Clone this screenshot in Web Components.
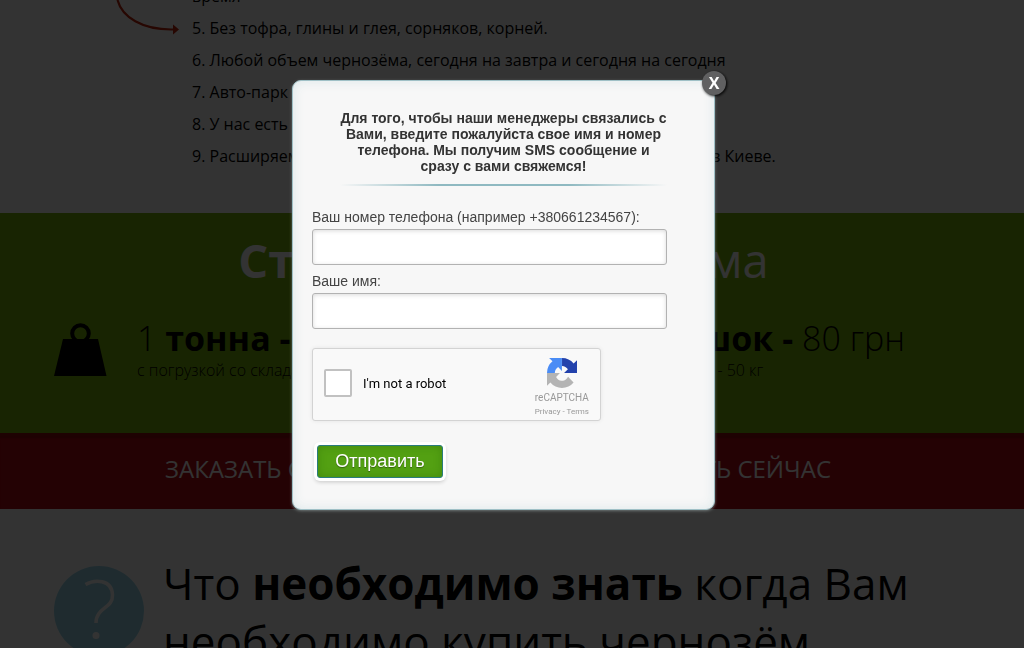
<!DOCTYPE html>
<html lang="ru">
<head>
<meta charset="utf-8">
<title>Чернозём</title>
<style>
html, body { margin: 0; height: 100%; }
body { overflow: hidden; background: #fff; color: #000; font-family: "Open Sans", "Noto Sans", sans-serif; }
</style>
</head>
<body>
<landing-page></landing-page>
<modal-overlay>
  <order-form></order-form>
</modal-overlay>
<script>
function define(name, html) {
  const template = document.createElement('template');
  template.innerHTML = html;
  customElements.define(name, class extends HTMLElement {
    constructor() {
      super();
      this.attachShadow({ mode: 'open' }).append(template.content.cloneNode(true));
    }
  });
}

define('benefit-list', `
<style>
:host { display: block; position: relative; height: 213px; box-sizing: border-box; padding-left: 192px; overflow: hidden; }
ul { list-style: none; margin: -20px 0 0; padding: 0; font-size: 16px; line-height: 32px; white-space: nowrap; }
svg { position: absolute; left: 112px; top: 0; }
</style>
<svg width="70" height="40" viewBox="0 0 70 40" aria-hidden="true">
  <path d="M5.500 0C10 17 30 30 61 29.500" fill="none" stroke="#c0240c" stroke-width="2.200"/>
  <path d="M61 24.500 67 29.500 61 34.500z" fill="#c0240c"/>
</svg>
<ul>
  <li>время</li>
  <li>5. Без тофра, глины и глея, сорняков, корней.</li>
  <li>6. Любой объем чернозёма, сегодня на завтра и сегодня на сегодня</li>
  <li>7. Авто-парк</li>
  <li>8. У нас есть</li>
  <li>9. Расширяем сеть доставки чернозёма по городам склады есть и в Киеве.</li>
</ul>`);

define('price-item', `
<style>
:host { display: block; white-space: nowrap; }
h3 { margin: 0; font-size: 34px; line-height: 44px; font-weight: 300; }
p { margin: 0; font-size: 16px; line-height: 20px; font-weight: 300; }
</style>
<h3><slot name="price"></slot></h3>
<p><slot></slot></p>`);

define('price-section', `
<style>
:host { display: block; height: 220px; box-sizing: border-box; padding: 15px 17px 0 0; background: #7ab60a; }
h2 { margin: 0; color: #fff; font-size: 47px; line-height: 64px; font-weight: 400; text-align: center; }
b { font-weight: 700; }
.prices { display: grid; grid-template-columns: 53px 1fr auto; column-gap: 30px; align-items: start; padding: 24px 102px 0 54px; }
svg { display: block; margin-top: 7px; }
</style>
<h2><b>Стоимость</b> чернозёма</h2>
<div class="prices">
  <svg width="53" height="54" viewBox="0 0 53 54" aria-hidden="true">
    <circle cx="26.500" cy="10.500" r="8.300" fill="none" stroke="#000" stroke-width="4"/>
    <path d="M9 16H44L52.500 53H0z"/>
  </svg>
  <price-item><span slot="price">1 <b>тонна -</b></span>с погрузкой со склада</price-item>
  <price-item><span slot="price">1 <b>мешок -</b> 80 грн</span>вес 1 мешка - 50 кг</price-item>
</div>`);

define('order-bar', `
<style>
:host { display: flex; justify-content: space-between; align-items: center; height: 76px; box-sizing: border-box; padding: 0 193px 4px 165px; background: #b40a14; box-shadow: inset 0 6px 2px -1px #960a0a; }
a { color: #fff; text-decoration: none; font-size: 24px; line-height: 32px; }
</style>
<a href="#order">ЗАКАЗАТЬ СЕЙЧАС</a>
<a href="#order">ЗАКАЗАТЬ СЕЙЧАС</a>`);

define('question-section', `
<style>
:host { display: flex; align-items: flex-start; gap: 19px; padding: 45px 17px 0 54px; }
svg { flex: none; margin-top: 12px; }
h2 { flex: 1; margin: 0; font-size: 44px; line-height: 58px; font-weight: 400; }
b { font-weight: 700; }
</style>
<svg width="90" height="90" viewBox="0 0 90 90" aria-hidden="true">
  <circle cx="45" cy="45" r="45" fill="#9ad8ec"/>
  <path d="M31.500 18.500C40 13.500 58 12.500 58.500 29C59 43 42 41 42 57" fill="none" stroke="#fff" stroke-width="3.500"/>
  <circle cx="42" cy="69.500" r="3.500" fill="#fff"/>
</svg>
<h2>Что <b>необходимо знать</b> когда Вам необходимо купить чернозём</h2>`);

define('landing-page', `
<style>:host { display: block; height: 100%; overflow: hidden; }</style>
<benefit-list></benefit-list>
<price-section></price-section>
<order-bar></order-bar>
<question-section></question-section>`);

define('modal-overlay', `
<style>
:host { position: fixed; inset: 0; display: flex; justify-content: center; align-items: flex-start; padding: 80px 17px 0 0; background: rgba(0,0,0,.8); font-family: "Liberation Sans", Arial, sans-serif; }
.box { position: relative; width: 423px; box-sizing: border-box; padding: 29px 19px 31px; border: 1px solid #9fc0c6; border-radius: 9px; background: #f7f7f7; box-shadow: inset 0 0 12px #dce8ea, 0 1px 3px #707878; }
.close { position: absolute; top: -10px; right: -12px; width: 24px; height: 24px; padding: 0; border: 0; border-radius: 50%; background: #606061; color: #fff; font: bold 16px/24px "Open Sans", sans-serif; box-shadow: 1px 1px 3px #000; }
</style>
<div class="box" role="dialog" aria-modal="true">
  <slot></slot>
  <button class="close" type="button">X</button>
</div>`);

define('text-field', `
<style>
:host { display: block; }
label { display: block; font-size: 14px; line-height: 18px; color: #444; }
input { display: block; width: 355px; max-width: 100%; height: 36px; box-sizing: border-box; margin: 3px 0 7px; padding: 0 10px; border: 1px solid #b2b2b2; border-radius: 3px; background: #fff; box-shadow: inset 0 1px 4px rgba(0,0,0,.15); font: 14px "Liberation Sans", sans-serif; }
</style>
<label for="field"><slot></slot></label>
<input id="field" type="text">`);

define('captcha-box', `
<style>
:host { display: flex; width: 289px; height: 73px; box-sizing: border-box; align-items: center; padding: 0 11px; border: 1px solid #d3d3d3; border-radius: 3px; background: #f9f9f9; box-shadow: 0 0 4px rgba(0,0,0,.08); font-family: Roboto, sans-serif; }
input { appearance: none; flex: none; width: 28px; height: 28px; margin: 0 11px 4px 0; border: 2px solid #c1c1c1; border-radius: 2px; background: #fff; }
label { flex: 1; padding-bottom: 2px; font-size: 13px; line-height: 18px; color: #000; }
.brand { display: flex; flex-direction: column; align-items: center; align-self: flex-start; padding-top: 9px; color: #999; }
.name { font-size: 10px; line-height: 14px; padding-top: 3px; }
.links { font-size: 8px; line-height: 14px; white-space: nowrap; }
a { color: inherit; text-decoration: none; }
</style>
<input id="robot" type="checkbox">
<label for="robot">I'm not a robot</label>
<div class="brand">
  <svg width="30" height="30" viewBox="0 0 64 64" aria-hidden="true">
    <path fill="#2342ac" d="M64 31.960a50 50 0 0 0-.020-1.370V4.640l-7.170 7.170A31.900 31.900 0 0 0 32.090 0v16.800a16 16 0 0 1 12.500 7.010l-8.150 8.150z"/>
    <path fill="#4a8cf5" d="M31.860 0a50 50 0 0 0-1.370.020H4.540l7.170 7.170A31.900 31.900 0 0 0 0 31.900h16.700a16 16 0 0 1 7.010-12.500l8.150 8.150z"/>
    <path fill="#b4b4b4" d="M0 32.140a50 50 0 0 0 .020 1.370v25.950l7.170-7.170A32 32 0 0 0 56.700 52.100L44.960 40.250a15.700 15.700 0 0 1-4.800 5.390c-2.070 1.610-5 2.930-9.050 2.930a15.900 15.900 0 0 1-11.700-8.290l8.150-8.150z"/>
  </svg>
  <span class="name">reCAPTCHA</span>
  <span class="links"><a href="#privacy">Privacy</a> - <a href="#terms">Terms</a></span>
</div>`);

define('order-form', `
<style>
:host { display: block; }
h4 { margin: 0 25px; font-size: 14px; line-height: 16px; text-align: center; color: #333; }
.rule { height: 2px; margin: 10px 28px 22px; background: linear-gradient(to right, transparent, #8fb9c1 30%, #8fb9c1 70%, transparent); }
captcha-box { margin: 19px 0 24px; }
.send { display: block; width: 126px; height: 33px; margin-left: 5px; padding: 0; border: 1px solid #2a7c7c; border-radius: 3px; background: #53a012; color: #fff; font: 18px/31px "Liberation Sans", Arial, sans-serif; text-shadow: 0 1px 1px rgba(0,0,0,.4); box-shadow: inset 0 0 8px rgba(30,90,0,.3), 0 0 0 3px #fff, 0 2px 4px 2px rgba(0,0,0,.2); }
</style>
<form>
  <h4>Для того, чтобы наши менеджеры связались с Вами, введите пожалуйста свое имя и номер телефона. Мы получим SMS сообщение и сразу с вами свяжемся!</h4>
  <div class="rule"></div>
  <text-field>Ваш номер телефона (например +380661234567):</text-field>
  <text-field>Ваше имя:</text-field>
  <captcha-box></captcha-box>
  <button class="send" type="button">Отправить</button>
</form>`);
</script>
</body>
</html>
